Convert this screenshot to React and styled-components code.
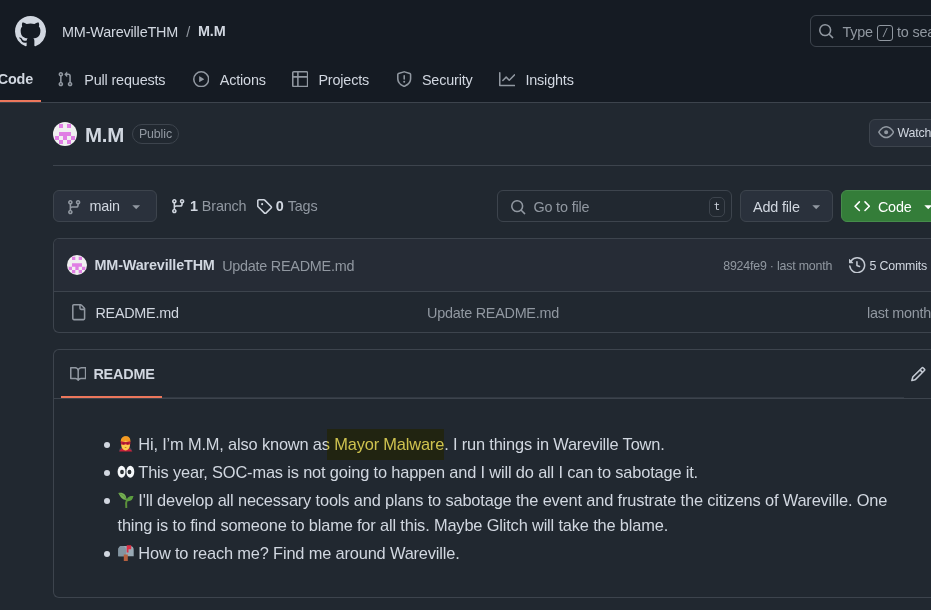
import React from "react";
import styled, { createGlobalStyle, css } from "styled-components";

const Global = createGlobalStyle`
  *, *::before, *::after { box-sizing: border-box; }
  html, body { margin: 0; overflow: hidden; background: #212830; }
  body { font-family: "Liberation Sans", Arial, sans-serif; font-size: 14.4px; color: #d1d7e0; }
`;

const paths = {
  mark: "M8 0c4.42 0 8 3.58 8 8a8.013 8.013 0 0 1-5.45 7.59c-.4.08-.55-.17-.55-.38 0-.27.01-1.13.01-2.2 0-.75-.25-1.23-.54-1.48 1.78-.2 3.65-.88 3.65-3.95 0-.88-.31-1.59-.82-2.15.08-.2.36-1.02-.08-2.12 0 0-.67-.22-2.2.82-.64-.18-1.32-.27-2-.27-.68 0-1.36.09-2 .27-1.53-1.03-2.2-.82-2.2-.82-.44 1.1-.16 1.92-.08 2.12-.51.56-.82 1.28-.82 2.15 0 3.06 1.86 3.75 3.64 3.95-.23.2-.44.55-.51 1.07-.46.21-1.61.55-2.33-.66-.15-.24-.6-.83-1.23-.82-.67.01-.27.38.01.53.34.19.73.9.82 1.13.16.45.68 1.31 2.69.94 0 .67.01 1.3.01 1.49 0 .21-.15.45-.55.38A7.995 7.995 0 0 1 0 8c0-4.42 3.58-8 8-8Z",
  pull: "M1.5 3.25a2.25 2.25 0 1 1 3 2.122v5.256a2.251 2.251 0 1 1-1.5 0V5.372A2.25 2.25 0 0 1 1.5 3.25Zm5.677-.177L9.573.677A.25.25 0 0 1 10 .854V2.5h1A2.5 2.5 0 0 1 13.5 5v5.628a2.251 2.251 0 1 1-1.5 0V5a1 1 0 0 0-1-1h-1v1.646a.25.25 0 0 1-.427.177L7.177 3.427a.25.25 0 0 1 0-.354ZM3.75 2.5a.75.75 0 1 0 0 1.5.75.75 0 0 0 0-1.5Zm0 9.5a.75.75 0 1 0 0 1.5.75.75 0 0 0 0-1.5Zm8.25.75a.75.75 0 1 0 1.5 0 .75.75 0 0 0-1.5 0Z",
  play: "M8 0a8 8 0 1 1 0 16A8 8 0 0 1 8 0ZM1.5 8a6.5 6.5 0 1 0 13 0 6.5 6.5 0 0 0-13 0Zm4.879-2.773 4.264 2.559a.25.25 0 0 1 0 .428l-4.264 2.559A.25.25 0 0 1 6 10.559V5.442a.25.25 0 0 1 .379-.215Z",
  table: "M0 1.75C0 .784.784 0 1.75 0h12.5C15.216 0 16 .784 16 1.75v12.5A1.75 1.75 0 0 1 14.25 16H1.75A1.75 1.75 0 0 1 0 14.25ZM6.5 6.5v8h7.75a.25.25 0 0 0 .25-.25V6.5Zm8-1.5V1.75a.25.25 0 0 0-.25-.25H6.5V5Zm-13 1.5v7.75c0 .138.112.25.25.25H5v-8ZM5 5V1.5H1.75a.25.25 0 0 0-.25.25V5Z",
  shield: "M7.467.133a1.748 1.748 0 0 1 1.066 0l5.25 1.68A1.75 1.75 0 0 1 15 3.48V7c0 1.566-.32 3.182-1.303 4.682-.983 1.498-2.585 2.813-5.032 3.855a1.697 1.697 0 0 1-1.33 0c-2.447-1.042-4.049-2.357-5.032-3.855C1.32 10.182 1 8.566 1 7V3.48a1.75 1.75 0 0 1 1.217-1.667Zm.61 1.429a.25.25 0 0 0-.153 0l-5.25 1.68a.25.25 0 0 0-.174.238V7c0 1.358.275 2.666 1.057 3.86.784 1.194 2.121 2.34 4.366 3.297a.196.196 0 0 0 .154 0c2.245-.956 3.582-2.104 4.366-3.298C13.225 9.666 13.5 8.36 13.5 7V3.48a.251.251 0 0 0-.174-.237l-5.25-1.68ZM8.75 4.75v3a.75.75 0 0 1-1.5 0v-3a.75.75 0 0 1 1.5 0ZM9 10.5a1 1 0 1 1-2 0 1 1 0 0 1 2 0Z",
  graph: "M1.5 1.75V13.5h13.75a.75.75 0 0 1 0 1.5H.75a.75.75 0 0 1-.75-.75V1.75a.75.75 0 0 1 1.5 0Zm14.28 2.53-5.25 5.25a.75.75 0 0 1-1.06 0L7 7.06 4.28 9.78a.751.751 0 0 1-1.042-.018.751.751 0 0 1-.018-1.042l3.25-3.25a.75.75 0 0 1 1.06 0L10 7.94l4.72-4.72a.751.751 0 0 1 1.042.018.751.751 0 0 1 .018 1.042Z",
  search: "M10.68 11.74a6 6 0 0 1-7.922-8.982 6 6 0 0 1 8.982 7.922l3.04 3.04a.749.749 0 0 1-.326 1.275.749.749 0 0 1-.734-.215ZM11.5 7a4.499 4.499 0 1 0-8.997 0A4.499 4.499 0 0 0 11.5 7Z",
  eye: "M8 2c1.981 0 3.671.992 4.933 2.078 1.27 1.091 2.187 2.345 2.637 3.023a1.62 1.62 0 0 1 0 1.798c-.45.678-1.367 1.932-2.637 3.023C11.67 13.008 9.981 14 8 14c-1.981 0-3.671-.992-4.933-2.078C1.797 10.83.88 9.576.43 8.898a1.62 1.62 0 0 1 0-1.798c.45-.677 1.367-1.931 2.637-3.022C4.33 2.992 6.019 2 8 2ZM1.679 7.932a.12.12 0 0 0 0 .136c.411.622 1.241 1.75 2.366 2.717C5.176 11.758 6.527 12.5 8 12.5c1.473 0 2.825-.742 3.955-1.715 1.124-.967 1.954-2.096 2.366-2.717a.12.12 0 0 0 0-.136c-.412-.621-1.242-1.75-2.366-2.717C10.824 4.242 9.473 3.5 8 3.5c-1.473 0-2.825.742-3.955 1.715-1.124.967-1.954 2.096-2.366 2.717ZM8 10a2 2 0 1 1-.001-3.999A2 2 0 0 1 8 10Z",
  branch: "M9.5 3.25a2.25 2.25 0 1 1 3 2.122V6A2.5 2.5 0 0 1 10 8.5H6a1 1 0 0 0-1 1v1.128a2.251 2.251 0 1 1-1.5 0V5.372a2.25 2.25 0 1 1 1.5 0v1.836A2.493 2.493 0 0 1 6 7h4a1 1 0 0 0 1-1v-.628A2.25 2.25 0 0 1 9.5 3.25Zm-6 0a.75.75 0 1 0 1.5 0 .75.75 0 0 0-1.5 0Zm8.25-.75a.75.75 0 1 0 0 1.5.75.75 0 0 0 0-1.5ZM4.25 12a.75.75 0 1 0 0 1.5.75.75 0 0 0 0-1.5Z",
  tag: "M1 7.775V2.75C1 1.784 1.784 1 2.75 1h5.025c.464 0 .91.184 1.238.513l6.25 6.25a1.75 1.75 0 0 1 0 2.474l-5.026 5.026a1.75 1.75 0 0 1-2.474 0l-6.25-6.25A1.752 1.752 0 0 1 1 7.775Zm1.5 0c0 .066.026.13.073.177l6.25 6.25a.25.25 0 0 0 .354 0l5.025-5.025a.25.25 0 0 0 0-.354l-6.25-6.25a.25.25 0 0 0-.177-.073H2.75a.25.25 0 0 0-.25.25ZM6 5a1 1 0 1 1 0 2 1 1 0 0 1 0-2Z",
  caret: "m4.427 7.427 3.396 3.396a.25.25 0 0 0 .354 0l3.396-3.396A.25.25 0 0 0 11.396 7H4.604a.25.25 0 0 0-.177.427Z",
  code: "m11.28 3.22 4.25 4.25a.75.75 0 0 1 0 1.06l-4.25 4.25a.749.749 0 0 1-1.275-.326.749.749 0 0 1 .215-.734L13.94 8l-3.72-3.72a.749.749 0 0 1 .326-1.275.749.749 0 0 1 .734.215Zm-6.56 0a.751.751 0 0 1 1.042.018.751.751 0 0 1 .018 1.042L2.06 8l3.72 3.72a.749.749 0 0 1-.326 1.275.749.749 0 0 1-.734-.215L.47 8.53a.75.75 0 0 1 0-1.06Z",
  history: "m.427 1.927 1.215 1.215a8.002 8.002 0 1 1-1.6 5.685.75.75 0 1 1 1.493-.154 6.5 6.5 0 1 0 1.18-4.458l1.358 1.358A.25.25 0 0 1 3.896 6H.25A.25.25 0 0 1 0 5.75V2.104a.25.25 0 0 1 .427-.177ZM7.75 4a.75.75 0 0 1 .75.75v2.992l2.028.812a.75.75 0 0 1-.557 1.392l-2.5-1A.751.751 0 0 1 7 8.25v-3.5A.75.75 0 0 1 7.75 4Z",
  file: "M2 1.75C2 .784 2.784 0 3.75 0h6.586c.464 0 .909.184 1.237.513l2.914 2.914c.329.328.513.773.513 1.237v9.586A1.75 1.75 0 0 1 13.25 16h-9.5A1.75 1.75 0 0 1 2 14.25Zm1.75-.25a.25.25 0 0 0-.25.25v12.5c0 .138.112.25.25.25h9.5a.25.25 0 0 0 .25-.25V6h-2.75A1.75 1.75 0 0 1 9 4.25V1.5Zm6.75.062V4.25c0 .138.112.25.25.25h2.688l-.011-.013-2.914-2.914-.013-.011Z",
  book: "M0 1.75A.75.75 0 0 1 .75 1h4.253c1.227 0 2.317.59 3 1.501A3.743 3.743 0 0 1 11.006 1h4.245a.75.75 0 0 1 .75.75v10.5a.75.75 0 0 1-.75.75h-4.507a2.25 2.25 0 0 0-1.591.659l-.622.621a.75.75 0 0 1-1.06 0l-.622-.621A2.25 2.25 0 0 0 5.258 13H.75a.75.75 0 0 1-.75-.75Zm7.251 10.324.004-5.073-.002-2.253A2.25 2.25 0 0 0 5.003 2.5H1.5v9h3.757a3.75 3.75 0 0 1 1.994.574ZM8.755 4.75l-.004 7.322a3.752 3.752 0 0 1 1.992-.572H14.5v-9h-3.495a2.25 2.25 0 0 0-2.25 2.25Z",
  pencil: "M11.013 1.427a1.75 1.75 0 0 1 2.474 0l1.086 1.086a1.75 1.75 0 0 1 0 2.474l-8.61 8.61c-.21.21-.47.364-.756.445l-3.251.93a.75.75 0 0 1-.927-.928l.929-3.25c.081-.286.235-.547.445-.758l8.61-8.61Zm.176 4.823L9.75 4.81l-6.286 6.287a.253.253 0 0 0-.064.108l-.558 1.953 1.953-.558a.253.253 0 0 0 .108-.064Zm1.238-3.763a.25.25 0 0 0-.354 0L10.811 3.75l1.439 1.44 1.263-1.263a.25.25 0 0 0 0-.354Z",
};

const Svg = styled.svg`
  display: block;
  flex: none;
  width: ${(p) => p.$size}px;
  height: ${(p) => p.$size}px;
  margin-left: ${(p) => p.$left || 0}px;
  margin-top: ${(p) => p.$top || 0}px;
  fill: ${(p) => p.$color};
`;

const Icon = ({ name, size = 16.4, color = "#9198a1", left, top }) => (
  <Svg viewBox="0 0 16 16" $size={size} $color={color} $left={left} $top={top} aria-hidden="true">
    <path d={paths[name]} />
  </Svg>
);

const Page = styled.div`
  width: 931px;
  height: 610px;
  overflow: hidden;
  background: #212830;
`;

const Header = styled.header`
  height: 103px;
  background: #151b23;
  border-bottom: 1px solid #3d444d;
`;

const TopBar = styled.div`
  display: flex;
  align-items: center;
  height: 62px;
  padding-left: 15px;
`;

const Label = styled.span`
  flex: none;
  white-space: nowrap;
  line-height: 20px;
  font-size: ${(p) => p.$size || 14.4}px;
  font-weight: ${(p) => (p.$bold ? 700 : 400)};
  color: ${(p) => (p.$muted ? "#9198a1" : "#d1d7e0")};
  letter-spacing: ${(p) => p.$track ?? -0.16}px;
  margin-left: ${(p) => p.$left || 0}px;
  margin-top: ${(p) => p.$top || 0}px;
`;

const GlobalSearch = styled.div`
  display: flex;
  align-items: center;
  flex: none;
  width: 340px;
  height: 32px;
  margin-left: auto;
  margin-right: -219px;
  padding-left: 7px;
  border: 1px solid #3d444d;
  border-radius: 6px;
`;

const SlashKey = styled.kbd`
  display: flex;
  align-items: center;
  justify-content: center;
  width: 16px;
  height: 16px;
  margin: 3px 4px 0 4px;
  border: 1px solid #9198a1;
  border-radius: 3px;
  font: italic 12px "Liberation Sans", sans-serif;
  color: #9198a1;
`;

const Nav = styled.nav`
  display: flex;
  height: 40px;
  overflow: hidden;
`;

const CurrentTab = styled.div`
  display: flex;
  justify-content: flex-end;
  align-items: center;
  width: 41px;
  margin-right: 15.5px;
  padding: 0 8px 4px 0;
  border-bottom: 2px solid #ec775c;
`;

const NavItem = styled.div`
  display: flex;
  align-items: center;
  flex: none;
  width: ${(p) => p.$width}px;
  padding-bottom: 6px;
`;

const Main = styled.main`
  padding-left: 53px;
`;

const TitleRow = styled.section`
  display: flex;
  align-items: center;
  height: 63px;
  border-bottom: 1px solid #3d444d;
`;

const Pill = styled.span`
  height: 20px;
  width: 47px;
  margin-left: 8px;
  border: 1px solid #3d444d;
  border-radius: 10px;
  font-size: 12.4px;
  letter-spacing: -0.1px;
  line-height: 19px;
  text-align: center;
  color: #9198a1;
`;

const Button = styled.button`
  display: flex;
  align-items: center;
  flex: none;
  width: ${(p) => p.$width}px;
  height: ${(p) => p.$height || 32}px;
  margin: 0 ${(p) => p.$right || 0}px 0 ${(p) => p.$left || 0}px;
  padding: 0 0 0 ${(p) => p.$pad}px;
  border: 1px solid #3d444d;
  border-radius: 6px;
  background: #2a313c;
  font-family: inherit;
  ${(p) =>
    p.$primary &&
    css`
      background: #347d39;
      border-color: #468c4b;
      & > span { color: #fff; }
    `}
`;

const WatchSlot = styled.div`
  display: flex;
  margin-left: auto;
  margin-right: -59px;
  margin-top: -3px;
`;

const Toolbar = styled.section`
  display: flex;
  align-items: center;
  height: 32px;
  margin-top: 24px;
`;

const FileSearch = styled.div`
  display: flex;
  align-items: center;
  flex: none;
  width: 235px;
  height: 32px;
  margin-left: auto;
  margin-right: 8px;
  padding: 0 6px 0 12px;
  border: 1px solid #3d444d;
  border-radius: 6px;
`;

const Key = styled.kbd`
  width: 16px;
  height: 20px;
  margin-left: auto;
  margin-top: 1px;
  border: 1px solid #3d444d;
  border-radius: 5px;
  font: 10.5px/17px "DejaVu Sans Mono", monospace;
  text-align: center;
  color: #d1d7e0;
`;

const Box = styled.section`
  height: ${(p) => p.$height}px;
  margin-top: 16px;
  border: 1px solid #3d444d;
  border-right: 0;
  border-radius: 6px 0 0 6px;
  overflow: hidden;
`;

const CommitRow = styled.div`
  display: flex;
  align-items: center;
  height: 53px;
  padding-left: 13px;
  background: #262c36;
  border-bottom: 1px solid #3d444d;
`;

const FileRow = styled.div`
  display: grid;
  grid-template-columns: 373px 1fr auto;
  align-items: center;
  height: 41px;
`;

const FileName = styled.div`
  display: flex;
  align-items: center;
  padding-left: 16px;
`;

const RightGroup = styled.div`
  display: flex;
  align-items: center;
  margin-left: auto;
  padding-right: 4px;
`;

const ReadmeBar = styled.div`
  display: flex;
  height: 49px;
  padding-left: 7px;
  border-bottom: 1px solid #3d444d;
`;

const TabStrip = styled.div`
  flex: none;
  display: flex;
  width: 843px;
  border-bottom: 1px solid #323942;
`;

const ReadmeTab = styled.div`
  display: flex;
  align-items: center;
  width: 101px;
  height: 48px;
  padding: 2px 0 0 8.5px;
  border-bottom: 2px solid #ec775c;
`;

const List = styled.ul`
  margin: 33px 0 0;
  padding: 0 0 0 63.5px;
  list-style: none;
  font-size: 16.4px;
  line-height: 24.2px;
`;

const Item = styled.li`
  display: flex;
  white-space: nowrap;
  margin-top: ${(p) => p.$gap || 0}px;
  &::before {
    content: "";
    flex: none;
    width: 6px;
    height: 6px;
    margin: 10px 7.5px 0 -13.5px;
    border-radius: 50%;
    background: #d1d7e0;
  }
`;

const Line = styled.div`
  letter-spacing: -0.165px;
`;

const Emoji = styled.svg`
  width: 16px;
  height: 16px;
  margin-right: 4.8px;
  vertical-align: -2px;
  overflow: visible;
`;

const Marked = styled.span`
  position: relative;
  &::after {
    content: "";
    position: absolute;
    left: -7.5px;
    right: 0;
    top: -6px;
    height: 31px;
    background: #fce659;
    mix-blend-mode: multiply;
  }
`;

const AvatarSvg = styled.svg`
  flex: none;
  width: ${(p) => p.$size}px;
  height: ${(p) => p.$size}px;
  border-radius: 50%;
`;

const Avatar = ({ size }) => (
  <AvatarSvg $size={size} viewBox="0 0 24 24">
    <rect width="24" height="24" fill="#f0f0f0" />
    <path
      fill="#e07fe4"
      d="M6 2h4v4H6zM14 2h4v4h-4zM6 10h12v4H6zM2 14h4v4H2zM10 14h4v4h-4zM18 14h4v4h-4zM6 18h4v4H6zM14 18h4v4h-4z"
    />
  </AvatarSvg>
);

const Villain = () => (
  <Emoji viewBox="0 0 16 16">
    <path d="M1 15c.5-3 2-4 4-4h5c2 0 3.500 1 4 4z" fill="#3f4757" />
    <path d="M1 15.500 4 12l3.500 2L11 12l3.500 3.500z" fill="#c9203b" />
    <path d="M3.200 5C3.200 2 5 .5 7.600.5S12 2 12 5v4c0 2.600-2.200 5.500-4.400 5.500S3.200 11.600 3.200 9z" fill="#fdcb4b" />
    <path d="M2.800 6C2.500 2 5 .2 8 .2S12.700 2 12.400 6L7.600 4.800z" fill="#f49a22" />
    <path d="M2.800 5.200 7.600 6l4.800-.8v3L9.500 9l-1.900-.8L5.700 9l-2.900-.8z" fill="#c4203a" />
    <path d="M4.500 6.700h2v.9h-2zM8.700 6.700h2v.9h-2z" fill="#681424" />
    <path d="M6.300 11.200h2.600l-1.300.8z" fill="#9c4b15" />
  </Emoji>
);

const Eyes = () => (
  <Emoji viewBox="0 0 16 16">
    <ellipse cx="3.600" cy="7.700" rx="4" ry="6" fill="#f5f8fa" />
    <ellipse cx="12.300" cy="7.700" rx="4" ry="6" fill="#f5f8fa" />
    <ellipse cx="4" cy="8" rx="1.900" ry="2.300" fill="#292f33" />
    <ellipse cx="11.500" cy="8" rx="1.900" ry="2.300" fill="#292f33" />
  </Emoji>
);

const Seedling = () => (
  <Emoji viewBox="0 0 16 16">
    <path d="M8.300 16c-.5-4-.5-6 .8-9" fill="none" stroke="#5c913b" strokeWidth="1.900" />
    <path d="M.3 1C5 .2 8.500 2.200 8.500 8 4 8 2.500 5 .3 1z" fill="#77b255" />
    <path d="M15.500 4c-3.500-.5-6.500.6-7 5 4 .8 6-.9 7-5z" fill="#5c9e3f" />
    <path d="M1 1.700c3 .8 5.500 2.500 7.500 6" fill="none" stroke="#5c913b" strokeWidth=".8" />
  </Emoji>
);

const Mailbox = () => (
  <Emoji viewBox="0 0 16 16">
    <path d="M4 1h8c2.500 0 3.700 1.500 3.700 4v6.300H.3V5C.3 2.500 1.500 1 4 1z" fill="#99aab5" />
    <path d="M.3 5C.3 2.500 1.800 1 4 1s4 1.500 4 4v6.300H.3z" fill="#8395a1" />
    <path d="M8.700.2h4.500v4h-2.700v3.300H8.700z" fill="#dd2e44" />
    <path d="M5.800 9.500h4V16h-4z" fill="#b5603f" />
  </Emoji>
);

const navItems = [
  ["pull", "Pull requests", 136.5, 11.4],
  ["play", "Actions", 99, 10.3],
  ["table", "Projects", 104, 10],
  ["shield", "Security", 103, 9.5],
  ["graph", "Insights", 100, 10],
];

export default function App() {
  return (
    <Page>
      <Global />
      <Header>
        <TopBar>
          <Icon name="mark" size={31} color="#d1d7e0" />
          <Label $left={16} $top={2}>MM-WarevilleTHM</Label>
          <Label $left={8} $top={2} $muted>/</Label>
          <Label $left={8} $bold>M.M</Label>
          <GlobalSearch>
            <Icon name="search" />
            <Label $left={8} $top={2} $muted>Type</Label>
            <SlashKey>/</SlashKey>
            <Label $top={2} $muted>to search</Label>
          </GlobalSearch>
        </TopBar>
        <Nav>
          <CurrentTab><Label $bold>Code</Label></CurrentTab>
          {navItems.map(([icon, text, width, gap]) => (
            <NavItem key={text} $width={width}>
              <Icon name={icon} />
              <Label $left={gap} $top={2}>{text}</Label>
            </NavItem>
          ))}
        </Nav>
      </Header>
      <Main>
        <TitleRow>
          <Avatar size={24} />
          <Label $left={8} $top={2} $size={20.5} $track={-0.3} $bold>M.M</Label>
          <Pill>Public</Pill>
          <WatchSlot>
            <Button $width={121} $height={28} $pad={8}>
              <Icon name="eye" />
              <Label $left={3} $size={12.4}>Watch</Label>
            </Button>
          </WatchSlot>
        </TitleRow>
        <Toolbar>
          <Button $width={104} $pad={12}>
            <Icon name="branch" top={3} />
            <Label $left={7}>main</Label>
            <Icon name="caret" left={8} top={1} />
          </Button>
          <Icon name="branch" color="#d1d7e0" left={12.6} />
          <Label $left={4} $bold>1</Label>
          <Label $left={4} $muted>Branch</Label>
          <Icon name="tag" color="#d1d7e0" left={10} />
          <Label $left={3} $bold>0</Label>
          <Label $left={4} $muted>Tags</Label>
          <FileSearch>
            <Icon name="search" top={3} />
            <Label $left={7} $top={1} $muted>Go to file</Label>
            <Key>t</Key>
          </FileSearch>
          <Button $width={93} $pad={12} $right={8}>
            <Label $top={1}>Add file</Label>
            <Icon name="caret" left={8} top={1} />
          </Button>
          <Button $width={110} $pad={12} $right={-20} $primary>
            <Icon name="code" color="#fff" />
            <Label $left={7.5} $top={1}>Code</Label>
            <Icon name="caret" color="#fff" left={8} top={1} />
          </Button>
        </Toolbar>
        <Box $height={95}>
          <CommitRow>
            <Avatar size={20} />
            <Label $left={7.5} $bold>MM-WarevilleTHM</Label>
            <Label $left={7.5} $top={2} $track={-0.25} $muted>Update README.md</Label>
            <RightGroup>
              <Label $size={12.4} $top={1} $track={-0.2} $muted>8924fe9 · last month</Label>
              <Icon name="history" color="#c3c9d2" left={17} />
              <Label $left={4} $size={12.4} $top={1} $track={-0.2}>5 Commits</Label>
            </RightGroup>
          </CommitRow>
          <FileRow>
            <FileName>
              <Icon name="file" />
              <Label $left={9} $top={1} $track={-0.25}>README.md</Label>
            </FileName>
            <Label $top={1} $track={-0.25} $muted>Update README.md</Label>
            <Label $top={1} $track={-0.25} $muted>last month</Label>
          </FileRow>
        </Box>
        <Box $height={249}>
          <ReadmeBar>
            <TabStrip>
              <ReadmeTab>
                <Icon name="book" />
                <Label $left={7.5} $bold>README</Label>
              </ReadmeTab>
            </TabStrip>
            <Icon name="pencil" left={6} top={16} color="#c3c9d2" />
          </ReadmeBar>
          <List>
            <Item><Line><Villain />Hi, I’m M.M, also known as <Marked>Mayor Malware</Marked>. I run things in Wareville Town.</Line></Item>
            <Item $gap={4}><Line><Eyes />This year, SOC-mas is not going to happen and I will do all I can to sabotage it.</Line></Item>
            <Item $gap={4}><Line><Seedling />I'll develop all necessary tools and plans to sabotage the event and frustrate the citizens of Wareville. One<br />thing is to find someone to blame for all this. Maybe Glitch will take the blame.</Line></Item>
            <Item $gap={4}><Line><Mailbox />How to reach me? Find me around Wareville.</Line></Item>
          </List>
        </Box>
      </Main>
    </Page>
  );
}
